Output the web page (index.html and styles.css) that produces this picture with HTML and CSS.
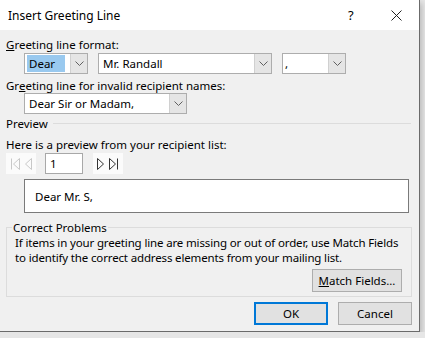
FILE: index.html
```html
<!DOCTYPE html>
<html lang="en">
<head>
  <meta charset="UTF-8">
  <title>Insert Greeting Line</title>
  <link rel="stylesheet" href="styles.css">
</head>
<body>
  <div class="dialog">
    <div class="titlebar">
      <div class="title">Insert Greeting Line</div>
      <div class="help">?</div>
      <div class="close">
        <svg width="11" height="11" viewBox="0 0 11 11"><path d="M0.5 0.5 L10.5 10.5 M10.5 0.5 L0.5 10.5" stroke="#222" stroke-width="1" fill="none"/></svg>
      </div>
    </div>

    <div class="content">
      <div class="label first"><u>G</u>reeting line format:</div>
      <div class="combo-row indent">
        <div class="combo w-dear">
          <div class="field"><span class="selected">Dear</span></div>
          <div class="drop"><svg width="9" height="5" viewBox="0 0 9 5"><path d="M0.5 0.5 L4.5 4.5 L8.5 0.5" stroke="#606060" fill="none"/></svg></div>
        </div>
        <div class="combo w-name">
          <div class="field">Mr. Randall</div>
          <div class="drop"><svg width="9" height="5" viewBox="0 0 9 5"><path d="M0.5 0.5 L4.5 4.5 L8.5 0.5" stroke="#606060" fill="none"/></svg></div>
        </div>
        <div class="combo w-punct">
          <div class="field">,</div>
          <div class="drop"><svg width="9" height="5" viewBox="0 0 9 5"><path d="M0.5 0.5 L4.5 4.5 L8.5 0.5" stroke="#606060" fill="none"/></svg></div>
        </div>
      </div>

      <div class="label second">Gr<u>e</u>eting line for invalid recipient names:</div>
      <div class="indent">
        <div class="combo w-invalid">
          <div class="field">Dear Sir or Madam,</div>
          <div class="drop"><svg width="9" height="5" viewBox="0 0 9 5"><path d="M0.5 0.5 L4.5 4.5 L8.5 0.5" stroke="#606060" fill="none"/></svg></div>
        </div>
      </div>

      <div class="section">
        <span>Preview</span>
        <div class="rule"></div>
      </div>
      <div class="label">Here is a preview from your recipient list:</div>
      <div class="nav-row">
        <div class="nav-btns">
          <svg width="12" height="12" viewBox="0 0 12 12"><path d="M1.5 0.5 V11.5 M9.5 0.5 L3.5 6 L9.5 11.5 Z" stroke="#c8c8c8" fill="none"/></svg>
          <svg width="8" height="12" viewBox="0 0 8 12"><path d="M6.5 0.5 L0.5 6 L6.5 11.5 Z" stroke="#c8c8c8" fill="none"/></svg>
        </div>
        <div class="record">1</div>
        <div class="nav-btns">
          <svg width="8" height="12" viewBox="0 0 8 12"><path d="M0.5 0.5 L6.5 6 L0.5 11.5 Z" stroke="#333" fill="none"/></svg>
          <svg width="12" height="12" viewBox="0 0 12 12"><path d="M1.5 0.5 L7.5 6 L1.5 11.5 Z M9.5 0.5 V11.5" stroke="#333" fill="none"/></svg>
        </div>
      </div>
      <div class="indent">
        <div class="preview-box">Dear Mr. S,</div>
      </div>

      <fieldset class="group">
        <legend>Correct Problems</legend>
        <p class="group-text">If items in your greeting line are missing or out of order, use Match Fields<br>to identify the correct address elements from your mailing list.</p>
        <div class="group-actions">
          <button class="btn match"><u>M</u>atch Fields...</button>
        </div>
      </fieldset>

      <div class="footer">
        <button class="btn ok">OK</button>
        <button class="btn">Cancel</button>
      </div>
    </div>
  </div>
</body>
</html>
```

FILE: styles.css
```css
body {
  margin: 0;
  background-color: #e6e6e6;
  font-family: "Noto Sans", "Open Sans", sans-serif;
  font-size: 11.5px;
  color: #000;
}
.dialog {
  width: 419px;
  height: 331px;
  background-color: #f0f0f0;
  border-right: 1px solid #6b6b6b;
  border-bottom: 1px solid #6b6b6b;
  box-shadow: 2px 3px 6px rgba(0, 0, 0, 0.2);
  display: flex;
  flex-direction: column;
  overflow: hidden;
}
.titlebar {
  flex-shrink: 0;
  height: 30px;
  background-color: #fff;
  display: flex;
  align-items: center;
  padding-left: 8px;
  font-size: 12px;
}
.title {
  flex: 1;
}
.help {
  width: 12px;
  margin-right: 31px;
  font-size: 13px;
}
.close {
  width: 11px;
  height: 11px;
  margin-right: 17px;
  display: flex;
}
.content {
  padding: 0 6px;
  line-height: 15px;
}
.label.first {
  margin-top: 7px;
}
.label.second {
  margin-top: 4px;
}
.indent {
  padding-left: 18px;
}
.combo-row {
  display: flex;
  gap: 10px;
  margin-top: 1px;
}
.combo {
  height: 19px;
  border: 1px solid #adadad;
  background-color: #fff;
  display: flex;
}
.combo .field {
  flex: 1;
  padding-left: 2px;
  display: flex;
  align-items: center;
}
.combo .drop {
  width: 16px;
  background-color: #e5e5e5;
  border-left: 1px solid #d0d0d0;
  display: flex;
  align-items: center;
  justify-content: center;
}
.selected {
  background-color: #99c9ef;
  padding: 1px 2px;
  width: 34px;
}
.w-dear { width: 62px; }
.w-name { width: 172px; }
.w-punct { width: 62px; }
.w-invalid { width: 161px; }
.w-name .field, .w-invalid .field {
  padding-left: 4px;
}
.section {
  display: flex;
  align-items: center;
  margin-top: 2px;
}
.section .rule {
  flex: 1;
  height: 1px;
  background-color: #dcdcdc;
  margin-left: 5px;
  margin-right: 2px;
}
.section + .label {
  margin-top: 6px;
}
.nav-row {
  display: flex;
  align-items: center;
  margin-top: 1px;
  height: 21px;
}
.nav-btns {
  width: 30px;
  height: 21px;
  background-color: #fbfbfb;
  display: flex;
  align-items: center;
  justify-content: center;
  gap: 3px;
}
.record {
  width: 32px;
  height: 19px;
  border: 1px solid #a8a8a8;
  background-color: #fff;
  margin: 0 10px 0 9px;
  padding-left: 4px;
  display: flex;
  align-items: center;
}
.preview-box {
  height: 32px;
  border: 1px solid #7a7a7a;
  background-color: #fff;
  margin-top: 5px;
  margin-right: 4px;
  padding-left: 10px;
  display: flex;
  align-items: center;
}
.group {
  margin: 7px 1px 0 0;
  padding: 0 8px 4px 8px;
  border: 1px solid #dcdcdc;
}
.group legend {
  padding: 0 1px;
  margin-left: -3px;
}
.group-text {
  margin: 0;
  line-height: 15px;
  white-space: nowrap;
  letter-spacing: -0.15px;
}
.group-actions {
  display: flex;
  justify-content: flex-end;
  margin-top: 4px;
}
.btn {
  font-family: inherit;
  font-size: 11.5px;
  height: 23px;
  width: 74px;
  background-color: #e1e1e1;
  border: 1px solid #adadad;
  padding: 0;
  color: #000;
}
.btn.match {
  width: 90px;
  margin-right: 1px;
}
.btn.ok {
  border: 2px solid #0078d7;
}
.footer {
  display: flex;
  justify-content: flex-end;
  gap: 10px;
  margin-top: 5px;
  margin-right: 1px;
}
```
